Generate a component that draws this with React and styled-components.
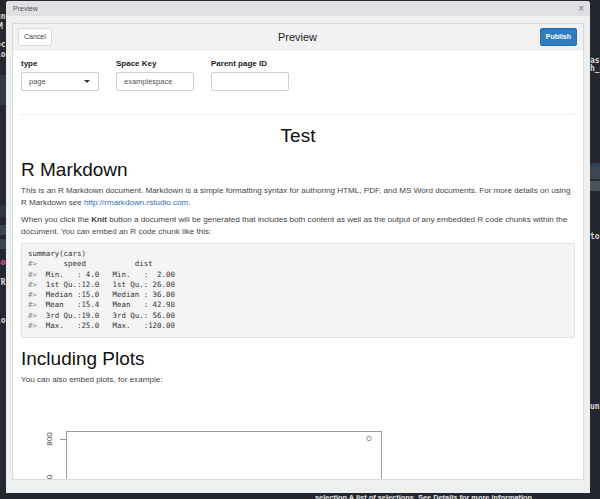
import React from "react";
import styled, { createGlobalStyle } from "styled-components";

const Global = createGlobalStyle`
  html, body { margin: 0; padding: 0; background: #25272e; }
  #root { width: 600px; height: 499px; overflow: hidden; }
`;

const Page = styled.div`
  width: 600px;
  height: 499px;
  display: grid;
  grid-template-columns: 6px 584px 10px;
  grid-template-rows: 1px 492px 6px;
  background: #25272e;
  overflow: hidden;
  font-family: "Helvetica Neue", "Liberation Sans", Arial, sans-serif;
`;

const Strip = styled.div`
  grid-row: 2;
  grid-column: ${(p) => p.$col};
  position: relative;
  overflow: hidden;
`;

const BgBand = styled.div`
  height: ${(p) => p.$h}px;
  margin-top: ${(p) => p.$mt}px;
  background: ${(p) => p.$bg || "transparent"};
  color: ${(p) => p.$color || "#d8d8d8"};
  font: bold 8px "DejaVu Sans Mono", monospace;
  line-height: ${(p) => p.$h}px;
  white-space: nowrap;
  margin-left: ${(p) => p.$ml || 0}px;
`;

const BottomText = styled.div`
  grid-row: 3;
  grid-column: 2;
  padding-left: 309px;
  font: bold 7.4px "Liberation Sans", Arial, sans-serif;
  color: #e6e6e6;
  line-height: 10px;
  white-space: nowrap;
  overflow: hidden;
`;

const Window = styled.div`
  grid-row: 2;
  grid-column: 2;
  display: flex;
  flex-direction: column;
  background: #eef0f0;
  border-radius: 3px 3px 0 0;
  overflow: hidden;
`;

const TitleBar = styled.div`
  height: 15px;
  flex: none;
  background: #dfe0e2;
  display: flex;
  align-items: center;
  justify-content: space-between;
  padding: 0 6px 0 7px;
  font-size: 7px;
  color: #555;
`;

const Close = styled.span`
  font-size: 10px;
  color: #777;
  line-height: 1;
`;

const Body = styled.div`
  flex: 1;
  min-height: 0;
  padding: 7px 6px 13px 6px;
  display: flex;
`;

const Panel = styled.div`
  flex: 1;
  border: 1px solid #d9dbdb;
  background: #fff;
  display: flex;
  flex-direction: column;
  overflow: hidden;
`;

const Header = styled.div`
  flex: none;
  height: 26px;
  box-sizing: border-box;
  background: #f2f2f2;
  border-bottom: 1px solid #e6e6e6;
  display: grid;
  grid-template-columns: 1fr auto 1fr;
  align-items: center;
  padding: 0 6px 0 5px;
`;

const Btn = styled.button`
  justify-self: ${(p) => p.$align};
  height: 18px;
  box-sizing: border-box;
  padding: 0 5px;
  font: ${(p) => (p.$primary ? "600" : "400")} 7px "Helvetica Neue", "Liberation Sans", Arial, sans-serif;
  border-radius: 2px;
  border: 1px solid ${(p) => (p.$primary ? "#2a6dad" : "#dcdcdc")};
  background: ${(p) => (p.$primary ? "#2f7cc3" : "#fff")};
  color: ${(p) => (p.$primary ? "#fff" : "#444")};
`;

const HeaderTitle = styled.div`
  font-size: 11px;
  color: #222;
`;

const Content = styled.div`
  flex: 1;
  min-height: 0;
  padding: 0 8px 0 8px;
  overflow: hidden;
`;

const FormRow = styled.div`
  display: flex;
  gap: 17px;
  padding-top: 9px;
`;

const Field = styled.div`
  display: flex;
  flex-direction: column;
  gap: 3px;
`;

const Label = styled.label`
  font-size: 8px;
  font-weight: 700;
  color: #222;
  line-height: 10px;
`;

const Input = styled.div`
  width: 78px;
  height: 19px;
  box-sizing: border-box;
  border: 1px solid #cfcfcf;
  border-radius: 2px;
  display: flex;
  align-items: center;
  justify-content: space-between;
  padding: 0 7px;
  font-size: 7.5px;
  color: #555;
`;

const Caret = styled.span`
  width: 0;
  height: 0;
  border-left: 3px solid transparent;
  border-right: 3px solid transparent;
  border-top: 3px solid #333;
  margin-right: 1px;
`;

const Rule = styled.hr`
  border: none;
  border-top: 1px solid #eeeeee;
  margin: 23px 0 0 0;
`;

const Title = styled.h1`
  text-align: center;
  font-weight: 400;
  font-size: 19px;
  margin: 10px 0 0 0;
  line-height: 22px;
  color: #111;
`;

const H2 = styled.h2`
  font-weight: 400;
  font-size: 19px;
  line-height: 22px;
  margin: ${(p) => p.$mt}px 0 4px 0;
  color: #111;
`;

const P = styled.p`
  font-size: 8.1px;
  line-height: 12px;
  color: #444;
  margin: 0 0 5px 0;
`;

const A = styled.a`
  color: #2f6fb5;
  text-decoration: none;
`;

const Pre = styled.pre`
  margin: 4px 0 0 0;
  background: #f4f4f4;
  border: 1px solid #e2e2e2;
  border-radius: 2px;
  padding: 5px 6px 6px 6px;
  font-family: Menlo, "DejaVu Sans Mono", "Liberation Mono", monospace;
  font-size: 7.4px;
  line-height: 10.3px;
  color: #333;
`;

const Comment = styled.span`
  color: #888;
`;

const PlotWrap = styled.div`
  margin-top: 9px;
`;

const codeLines = [
  ["#>", "      speed           dist    "],
  ["#>", "  Min.   : 4.0   Min.   :  2.00  "],
  ["#>", "  1st Qu.:12.0   1st Qu.: 26.00  "],
  ["#>", "  Median :15.0   Median : 36.00  "],
  ["#>", "  Mean   :15.4   Mean   : 42.98  "],
  ["#>", "  3rd Qu.:19.0   3rd Qu.: 56.00  "],
  ["#>", "  Max.   :25.0   Max.   :120.00  "],
];

export default function App() {
  return (
    <>
      <Global />
      <Page>
        <Strip $col={1}>
          <BgBand $h={8} $mt={12} $ml={-4}>un</BgBand>
          <BgBand $h={8} $mt={2} $ml={-2}>M</BgBand>
          <BgBand $h={8} $mt={10} $ml={-4}>oc</BgBand>
          <BgBand $h={8} $mt={2} $ml={-4}>lo</BgBand>
          <BgBand $h={30} $mt={16} $bg="#343940" />
          <BgBand $h={12} $mt={100} $bg="#30363c" />
          <BgBand $h={10} $mt={8} $bg="#3b4450" />
          <BgBand $h={10} $mt={4} $bg="#3b4450" />
          <BgBand $h={8} $mt={10} $color="#e05aa0" $ml={-4}>so</BgBand>
          <BgBand $h={8} $mt={12} $ml={-4}>/R</BgBand>
          <BgBand $h={8} $mt={30} $ml={-4}>lo</BgBand>
        </Strip>
        <Window>
          <TitleBar>
            <span>Preview</span>
            <Close>×</Close>
          </TitleBar>
          <Body>
            <Panel>
              <Header>
                <Btn $align="start">Cancel</Btn>
                <HeaderTitle>Preview</HeaderTitle>
                <Btn $align="end" $primary>Publish</Btn>
              </Header>
              <Content>
                <FormRow>
                  <Field>
                    <Label>type</Label>
                    <Input>
                      <span>page</span>
                      <Caret />
                    </Input>
                  </Field>
                  <Field>
                    <Label>Space Key</Label>
                    <Input>
                      <span>examplespace</span>
                    </Input>
                  </Field>
                  <Field>
                    <Label>Parent page ID</Label>
                    <Input />
                  </Field>
                </FormRow>
                <Rule />
                <Title>Test</Title>
                <H2 $mt={12}>R Markdown</H2>
                <P>
                  This is an R Markdown document. Markdown is a simple formatting syntax for authoring HTML, PDF, and MS Word documents. For more details on using R Markdown see{" "}
                  <A>http://rmarkdown.rstudio.com</A>.
                </P>
                <P>
                  When you click the <b>Knit</b> button a document will be generated that includes both content as well as the output of any embedded R code chunks within the document. You can embed an R code chunk like this:
                </P>
                <Pre>
                  {"summary(cars)\n"}
                  {codeLines.map(([c, t], i) => (
                    <React.Fragment key={i}>
                      <Comment>{c}</Comment>
                      {t + (i < codeLines.length - 1 ? "\n" : "")}
                    </React.Fragment>
                  ))}
                </Pre>
                <H2 $mt={10}>Including Plots</H2>
                <P>You can also embed plots, for example:</P>
                <PlotWrap>
                  <svg width="380" height="90" viewBox="0 0 380 90">
                    <rect x="45.5" y="36.5" width="315" height="60" fill="none" stroke="#9a9a9a" strokeWidth="1" />
                    <line x1="39" y1="44.5" x2="45" y2="44.5" stroke="#9a9a9a" strokeWidth="1" />
                    <text x="31" y="44" transform="rotate(-90 31 44)" textAnchor="middle" fontSize="8" fill="#444" fontFamily="Liberation Sans, Arial, sans-serif">800</text>
                    <text x="31" y="82" transform="rotate(-90 31 82)" textAnchor="middle" fontSize="8" fill="#444" fontFamily="Liberation Sans, Arial, sans-serif">0</text>
                    <circle cx="348" cy="43.5" r="2.2" fill="none" stroke="#777" strokeWidth="0.8" />
                  </svg>
                </PlotWrap>
              </Content>
            </Panel>
          </Body>
        </Window>
        <Strip $col={3}>
          <BgBand $h={8} $mt={56} $ml={0}>ast</BgBand>
          <BgBand $h={8} $mt={0} $ml={0}>h_d</BgBand>
          <BgBand $h={4} $mt={90} $bg="#2f3f55" />
          <BgBand $h={12} $mt={0} $bg="#3d4550" />
          <BgBand $h={10} $mt={2} $bg="#4a525c" />
          <BgBand $h={12} $mt={40} $ml={0}>to</BgBand>
          <BgBand $h={8} $mt={160} $ml={0}>un</BgBand>
        </Strip>
        <BottomText>selection A list of selections. See Details for more information.</BottomText>
      </Page>
    </>
  );
}
